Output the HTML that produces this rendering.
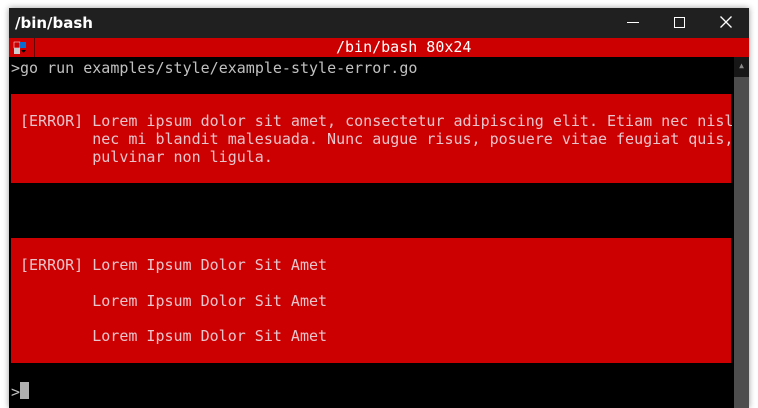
<!DOCTYPE html>
<html><head><style>
body{margin:0;width:758px;height:405px;background:#fff;position:relative;overflow:hidden;font-family:"DejaVu Sans Mono","Liberation Mono",monospace;}
.win{position:absolute;left:9px;top:8px;width:740px;height:400px;background:#000;box-shadow:0 0 6px rgba(0,0,0,.4);}
.tb{position:absolute;left:0;top:0;width:740px;height:30px;background:#202020;color:#fff;font:bold 15px "DejaVu Sans","Liberation Sans",sans-serif;}
.tb span.t{position:absolute;left:6px;top:6px;}
.rb{position:absolute;left:0;top:30px;width:740px;height:19px;background:#cc0000;color:#fff;font-size:15px;line-height:19px;}
.ic{position:absolute;left:0;top:30px;width:25px;height:19px;border-right:1px solid #600;background:#cc0000;}
.t{position:absolute;font-size:15px;white-space:pre;line-height:18px;}
.red{position:absolute;left:2px;width:720px;background:#cc0000;}
.p{color:#e8c4cc;}
</style></head><body>
<div class="win">
 <div class="tb"><span class="t">/bin/bash</span>
  <div style="position:absolute;left:618px;top:14px;width:12px;height:1px;background:#fff"></div>
  <div style="position:absolute;left:665px;top:9px;width:9px;height:9px;border:1px solid #fff"></div>
  <svg style="position:absolute;left:711px;top:8px" width="12" height="12"><path d="M0.5 0.5L11.5 11.5M11.5 0.5L0.5 11.5" stroke="#fff" stroke-width="1.3"/></svg>
 </div>
 <div class="rb"><span style="position:absolute;left:327px;top:0">/bin/bash 80x24</span></div>
 <div class="ic"><svg width="25" height="19"><rect x="5" y="4" width="6" height="6" fill="#c00" stroke="#fff" stroke-width=".5"/><rect x="11" y="4" width="6" height="6" fill="#0a6ed0"/><rect x="5" y="10" width="6" height="6" fill="#ccc"/><path d="M12 12h5l-2.5 3z" fill="#000"/></svg></div>
 <div class="t" style="left:2px;top:51px;color:#c0c0c0">&gt;go run examples/style/example-style-error.go</div>
 <div class="red" style="top:86px;height:89px"></div>
 <div class="t p" style="left:11px;top:104px">[ERROR] Lorem ipsum dolor sit amet, consectetur adipiscing elit. Etiam nec nisl
        nec mi blandit malesuada. Nunc augue risus, posuere vitae feugiat quis,
        pulvinar non ligula.</div>
 <div class="red" style="top:230px;height:125px"></div>
 <div class="t p" style="left:11px;top:240px;line-height:35.5px">[ERROR] Lorem Ipsum Dolor Sit Amet
        Lorem Ipsum Dolor Sit Amet
        Lorem Ipsum Dolor Sit Amet</div>
 <div class="t" style="left:2px;top:375px;color:#c0c0c0">&gt;</div>
 <div style="position:absolute;left:11px;top:374px;width:9px;height:17px;background:#b0b0b0"></div>
 <div style="position:absolute;left:725px;top:49px;width:15px;height:351px;background:#4d4d4d"></div>
 <div style="position:absolute;left:725px;top:49px;width:15px;height:20px;background:#171717;color:#888;font-size:8px;text-align:center;line-height:18px">▲</div>
</div>
</body></html>
